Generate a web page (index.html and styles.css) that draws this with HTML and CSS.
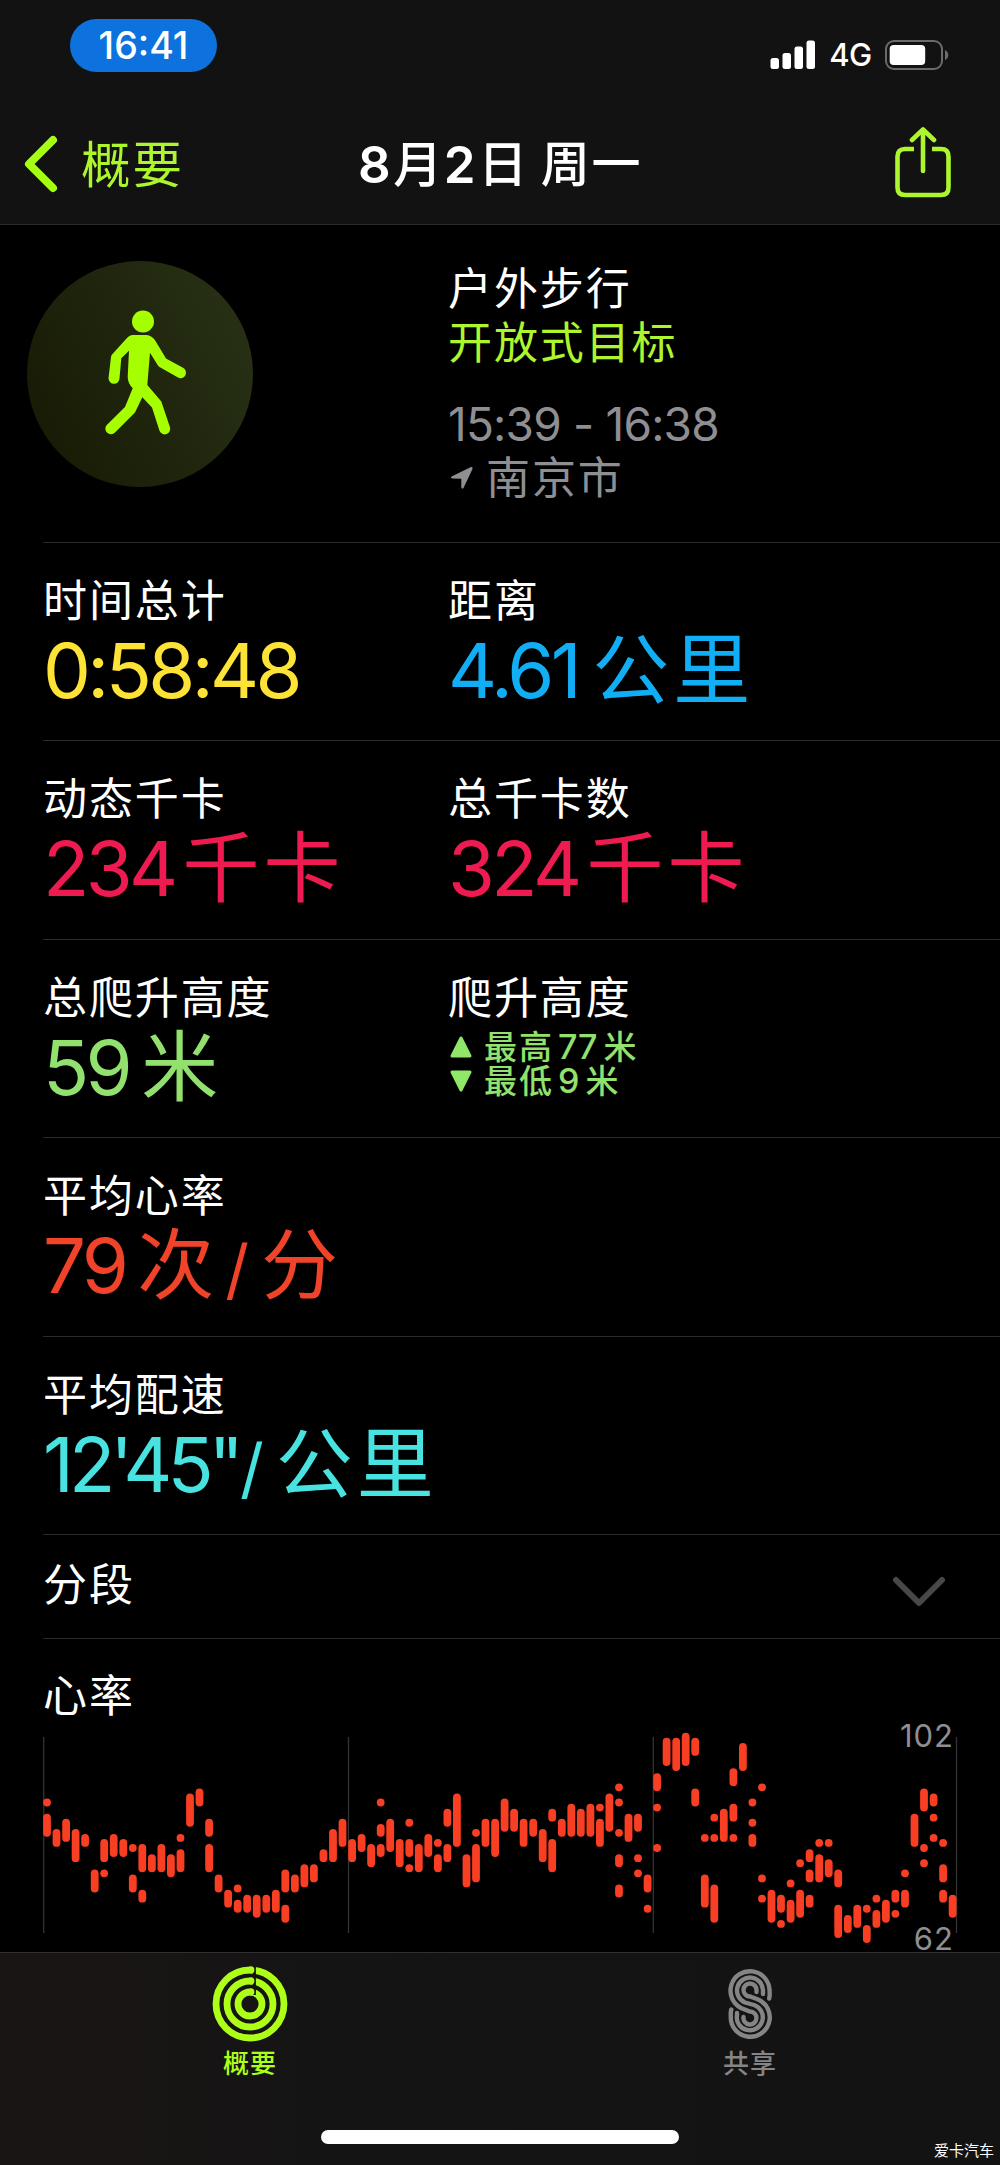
FILE: index.html
```html
<!DOCTYPE html>
<html lang="zh-CN">
<head>
    <meta charset="UTF-8">
    <meta name="viewport" content="width=device-width, initial-scale=1.0">
    <title>8月2日 周一</title>
    <link rel="stylesheet" href="styles.css">
</head>
<body>

    <div class="screen">
        <header class="top">
            <div class="status-bar">
                <div class="time-pill">16:41</div>
                <div class="status-icons">
                    <svg class="signal" width="46" height="30" viewBox="0 0 46 30">
                        <rect x="0.5" y="18" width="8.5" height="11" rx="2.5"/>
                        <rect x="12.5" y="13" width="8.5" height="16" rx="2.5"/>
                        <rect x="24.5" y="6.5" width="8.5" height="22.5" rx="2.5"/>
                        <rect x="36.5" y="0.5" width="8.5" height="28.5" rx="2.5"/>
                    </svg>
                    <span class="network">4G</span>
                    <svg class="battery" width="64" height="30" viewBox="0 0 64 30">
                        <rect x="1" y="1" width="56" height="28" rx="8" fill="none" stroke="#6b6b6b" stroke-width="2"/>
                        <rect x="4.7" y="5" width="35.5" height="20" rx="4" fill="#fff"/>
                        <path d="M60 10 Q63.300 11.500 63.300 15 Q63.300 18.500 60 20 Z" fill="#6b6b6b"/>
                    </svg>
                </div>
            </div>
            <nav class="nav">
                <a class="back">
                    <svg width="34" height="58" viewBox="0 0 34 58">
                        <path d="M29 5 L5 29 L29 53" fill="none" stroke="#a6ff12" stroke-width="8" stroke-linecap="round" stroke-linejoin="round"/>
                    </svg>
                    <span>概要</span>
                </a>
                <h1 class="title"><b>8</b>月<b>2</b>日<i></i>周一</h1>
                <svg class="share" width="58" height="74" viewBox="0 0 58 74">
                    <g fill="none" stroke="#adf52c" stroke-width="4.600">
                        <path d="M20 22 H11 Q3.500 22 3.500 29.500 V60.500 Q3.500 68 11 68 H47 Q54.500 68 54.500 60.500 V29.500 Q54.500 22 47 22 H38"/>
                        <path d="M29 3 V44" stroke-linecap="round"/>
                        <path d="M18 13 L29 2.500 L40 13" stroke-linecap="round" stroke-linejoin="round"/>
                    </g>
                </svg>
            </nav>
        </header>

        <main class="content">
            <section class="workout">
                <div class="badge">
                    <svg width="226" height="226" viewBox="0 0 226 226" fill="#a6ff00">
                        <circle cx="116" cy="60.500" r="11"/>
                        <path d="M105 74 H120 Q125.500 75 128.500 80 L139 97.500 L156 106.800 A5.500 5.500 0 0 1 151 116.600 L132.500 106 Q131 105 130 103 L123 91.700 L120.300 124 L134.300 140.500 L142.900 166 A5.500 5.500 0 0 1 132.500 169.700 L125 146.500 L115.300 136.300 L108 151.500 L88 171.500 A5.500 5.500 0 0 1 79.800 164 L98 146 L105.700 127.300 Q100.700 122 100.700 115.700 L102 89.700 L94.300 97.300 L92.500 117.300 A5.500 5.500 0 0 1 81.500 117.300 L84 96 Q84.300 94 85.500 93 L100 77 Q102 74.500 105 74 Z"/>
                    </svg>
                </div>
                <div class="workout-info">
                    <div class="line white">户外步行</div>
                    <div class="line lime">开放式目标</div>
                    <div class="line gray hours">15:39 - 16:38</div>
                    <div class="line gray place">
                        <svg width="24" height="24" viewBox="0 0 24 24">
                            <path d="M1.500 10.500 L21 1 Q23 0.500 22.500 3 L13.500 22 Q12 23.500 11.300 21.500 V12.700 L2 12.500 Q0 11.500 1.500 10.500 Z"/>
                        </svg>
                        <span>南京市</span>
                    </div>
                </div>
            </section>

            <section class="row">
                <div class="metric">
                    <div class="label">时间总计</div>
                    <div class="value yellow"><span class="num">0:58:48</span></div>
                </div>
                <div class="metric">
                    <div class="label">距离</div>
                    <div class="value blue"><span class="num">4.61</span><span class="unit">公里</span></div>
                </div>
            </section>

            <section class="row">
                <div class="metric">
                    <div class="label">动态千卡</div>
                    <div class="value pink"><span class="num">234</span><span class="unit">千卡</span></div>
                </div>
                <div class="metric">
                    <div class="label">总千卡数</div>
                    <div class="value pink"><span class="num">324</span><span class="unit">千卡</span></div>
                </div>
            </section>

            <section class="row">
                <div class="metric">
                    <div class="label">总爬升高度</div>
                    <div class="value green"><span class="num">59</span><span class="unit">米</span></div>
                </div>
                <div class="metric">
                    <div class="label">爬升高度</div>
                    <div class="elevation green">
                        <div class="elevation-line">
                            <svg width="24" height="24" viewBox="0 0 24 24"><path d="M12 3 L21 21 H3 Z"/></svg>
                            <span>最高</span><span class="small-num">77</span><span>米</span>
                        </div>
                        <div class="elevation-line">
                            <svg width="24" height="24" viewBox="0 0 24 24"><path d="M12 21 L3 3 H21 Z"/></svg>
                            <span>最低</span><span class="small-num">9</span><span>米</span>
                        </div>
                    </div>
                </div>
            </section>

            <section class="row">
                <div class="metric">
                    <div class="label">平均心率</div>
                    <div class="value red"><span class="num">79</span><span class="unit">次</span><span class="slash">/</span><span class="unit">分</span></div>
                </div>
            </section>

            <section class="row">
                <div class="metric">
                    <div class="label">平均配速</div>
                    <div class="value cyan"><span class="num pace">12'45"</span><span class="slash">/</span><span class="unit">公里</span></div>
                </div>
            </section>

            <section class="row splits">
                <div class="label">分段</div>
                <svg width="54" height="32" viewBox="0 0 54 32">
                    <path d="M4 4 L27 27 L50 4" fill="none" stroke="#48484a" stroke-width="6" stroke-linecap="round" stroke-linejoin="round"/>
                </svg>
            </section>

            <section class="heart">
                <div class="label">心率</div>
                <svg id="heartChart" class="chart" width="957" height="225" viewBox="0 0 957 225"></svg>
            </section>
        </main>

        <footer class="tab-bar">
            <div class="tabs">
                <a class="tab active">
                    <svg width="76" height="76" viewBox="0 0 76 76">
                        <g fill="none" stroke="#adff18" stroke-width="6.800">
                            <circle cx="38" cy="38" r="34"/>
                            <circle cx="38" cy="38" r="23"/>
                            <circle cx="38" cy="38" r="12"/>
                        </g>
                        <path d="M42.300 0 V29" stroke="#151413" stroke-width="3.200"/>
                        <g fill="#adff18">
                            <circle cx="39" cy="4" r="3.400"/>
                            <circle cx="39" cy="15" r="3.400"/>
                            <circle cx="39" cy="26" r="3.400"/>
                        </g>
                    </svg>
                    <span>概要</span>
                </a>
                <a class="tab">
                    <svg width="76" height="76" viewBox="0 0 76 76">
                        <g fill="none" stroke="#858585" stroke-width="4.400" stroke-linecap="round">
                            <path d="M57.200 32.500 Q58 29 57.500 24 A19.500 19.500 0 1 0 29 42 L38 45.500 A6.500 6.500 0 1 1 31.500 51"/>
                            <path d="M51 28 V24 A13 13 0 1 0 33 36.500 L42 39 A13 13 0 1 1 25 49 V47"/>
                            <path d="M44.500 26 V24 A6.500 6.500 0 1 0 38 30.500 L45 33 A19.500 19.500 0 1 1 18.800 50 Q18.500 46 19.300 43.500"/>
                        </g>
                    </svg>
                    <span>共享</span>
                </a>
            </div>
            <div class="home-indicator"></div>
            <div class="watermark">爱卡汽车</div>
        </footer>
    </div>

    <script src="script.js"></script>
</body>
</html>
```
FILE: styles.css
```css
* {
    box-sizing: border-box;
}

body {
    margin: 0;
    background-color: #000;
    color: #fff;
    font-family: Inter, "Noto Sans CJK SC", sans-serif;
}

.screen {
    width: 1000px;
    height: 2165px;
    display: flex;
    flex-direction: column;
    overflow: hidden;
}

/* status bar and navigation */
.top {
    height: 225px;
    background-color: #121212;
    border-bottom: 1px solid #2a2a2a;
}

.status-bar {
    display: flex;
    justify-content: space-between;
    align-items: flex-start;
    height: 104px;
    padding: 19px 51px 0 70px;
}

.time-pill {
    width: 147px;
    height: 53px;
    border-radius: 27px;
    background-color: #0e72de;
    font-size: 37.5px;
    font-weight: 500;
    line-height: 54px;
    text-align: center;
}

.status-icons {
    display: flex;
    align-items: center;
    padding-top: 21px;
}

.signal {
    fill: #fff;
}

.network {
    width: 69px;
    text-align: center;
    font-size: 31px;
    font-weight: 500;
    line-height: 30px;
    letter-spacing: -0.5px;
}

.nav {
    display: grid;
    grid-template-columns: 1fr auto 1fr;
    align-items: center;
    height: 120px;
    padding: 0 24px;
}

.back {
    display: flex;
    align-items: center;
    gap: 23px;
    color: #adf52c;
    font-size: 49.5px;
    line-height: 60px;
    letter-spacing: 2px;
}

.back span,
.title {
    padding-top: 2px;
}

.title {
    margin: 0;
    display: flex;
    align-items: center;
    font-size: 49px;
    font-weight: 500;
    line-height: 60px;
    letter-spacing: 1.6px;
}

.title b {
    padding-right: 1px;
    font-size: 51px;
    font-weight: 600;
}

.title i {
    width: 12px;
}

.share {
    justify-self: end;
    margin-right: 24px;
}

/* workout header */
.content {
    height: 1727px;
}

.workout {
    display: flex;
    height: 317px;
    padding: 36px 0 0 27px;
}

.badge {
    width: 226px;
    height: 226px;
    border-radius: 50%;
    background: linear-gradient(65deg, #181b05 10%, #262f14 85%);
}

.workout-info {
    padding: 1px 0 0 195px;
}

.line {
    height: 54px;
    font-size: 44px;
    line-height: 54px;
    letter-spacing: 1.9px;
}

.hours {
    margin-top: 27px;
    font-size: 46px;
    letter-spacing: -0.8px;
}

.place {
    display: flex;
    align-items: center;
    gap: 12px;
}

.place svg {
    margin-left: 2px;
    fill: #8e8e93;
}

.white {
    color: #fff;
}

.lime {
    color: #adf52c;
}

.gray {
    color: #8e8e93;
}

/* metric rows */
.row {
    display: grid;
    grid-template-columns: 405px 1fr;
    height: 198.4px;
    margin-left: 43px;
    border-top: 1px solid #2b2b2d;
}

.metric {
    padding-top: 31px;
}

.label {
    font-size: 44px;
    line-height: 54px;
    letter-spacing: 1.9px;
    white-space: nowrap;
}

.value {
    display: flex;
    align-items: center;
    height: 84px;
    line-height: 84px;
    white-space: nowrap;
}

.num {
    font-size: 76px;
    letter-spacing: -3.6px;
}

.unit {
    padding-left: 12px;
    font-size: 77px;
    letter-spacing: 4px;
}

.slash {
    padding: 8px 0 0 7px;
    font-size: 66px;
}

.pace {
    letter-spacing: -5px;
}

.pace + .slash {
    padding-left: 1px;
}

.blue .unit {
    padding-left: 14px;
}

.pink .unit {
    padding-left: 8px;
}

.yellow { color: #fde335; }
.blue { color: #12aef5; }
.pink { color: #ee1b51; }
.green { color: #92e06e; }
.red { color: #f1432a; }
.cyan { color: #48e2e0; }

.elevation {
    display: flex;
    flex-direction: column;
    padding-top: 5px;
    font-size: 33px;
    font-weight: 500;
}

.elevation-line {
    display: flex;
    align-items: center;
    height: 34px;
    line-height: 34px;
    letter-spacing: 2px;
}

.elevation-line svg {
    margin: 0 11px 0 1px;
    fill: #8fe868;
    stroke: #8fe868;
    stroke-width: 3;
    stroke-linejoin: round;
}

.small-num {
    padding: 0 6px 0 4px;
    font-size: 34px;
    letter-spacing: 0;
}

.splits {
    display: flex;
    justify-content: space-between;
    height: 104px;
    padding: 23px 54px 0 0;
}

.splits svg {
    margin-top: 18px;
}

.heart {
    margin-left: 43px;
    padding-top: 30px;
    border-top: 1px solid #2b2b2d;
}

.chart {
    display: block;
    margin-top: 4px;
    overflow: visible;
}

.grid-line {
    stroke: #333;
    stroke-width: 1.3;
}

.beat {
    stroke: #f83e23;
    stroke-width: 7.8;
    stroke-linecap: round;
}

.axis {
    fill: #8e8e93;
    font-size: 31px;
    letter-spacing: 1px;
    text-anchor: end;
}

/* bottom tabs */
.tab-bar {
    position: relative;
    height: 213px;
    background: linear-gradient(90deg, #1a1514 0, #141414 40%, #131313 100%);
    border-top: 1.500px solid #303030;
}

.tabs {
    display: grid;
    grid-template-columns: 1fr 1fr;
    padding-top: 13px;
}

.tab {
    display: flex;
    flex-direction: column;
    align-items: center;
    color: #858585;
    font-size: 26px;
    font-weight: 500;
    line-height: 36px;
    letter-spacing: 1px;
}

.tab span {
    padding-top: 4px;
}

.active {
    color: #adff18;
}

.home-indicator {
    width: 358px;
    height: 14px;
    margin: 48px auto 0;
    border-radius: 7px;
    background-color: #fff;
}

.watermark {
    position: absolute;
    right: 6px;
    bottom: 4px;
    font-size: 15px;
    line-height: 20px;
}
```
FILE: script.js
```js
// one entry per interval, each holding [high, low] ranges or single readings in bpm
const beats = [
    [89, [86, 83]], [[83, 81]], [[85, 82]], [[83, 78]], [[82, 81]], [[75, 72]], [[81, 78], 75], [[82, 79]],
    [[81, 79]], [80, [74, 72]], [[80, 76], [71, 70]], [[78, 76]], [[80, 76]], [[78, 75]], [82, [79, 76]], [[90, 85]],
    [[91, 89]], [[85, 83], [80, 76]], [[74, 72]], [[71, 69]], [72, [69, 68]], [[70, 68]], [[70, 67]], [[70, 68]],
    [[71, 68]], [[75, 72], [68, 66]], [[74, 72]], [[76, 73]], [[76, 74]], [[79, 78]], [[83, 78]], [[85, 81]],
    [[81, 78]], [[82, 80]], [[80, 77]], [89, [84, 83], [80, 79]], [[85, 80]], [[81, 77]], [85, [81, 79], 76], [[80, 76]],
    [[82, 79]], [81, [78, 76]], [[87, 85], [80, 78]], [[90, 81]], [[78, 73]], [83, [80, 74]], [[85, 81]], [[85, 79]],
    [[89, 84]], [[87, 84]], [[85, 81]], [[85, 83]], [[83, 78]], [[87, 86], [81, 76]], [[85, 83]], [[88, 83]],
    [[87, 83]], [[88, 83]], [88, [85, 81]], [[90, 84]], [92, 89, 83, [78, 77], [72, 71]], [[86, 82]], [[86, 84], 78, 75], [[74, 72], 68],
    [[94, 92], 88, 80], [[101, 97]], [[101, 96]], [[102, 97]], [[101, 99], [91, 89]], [82, [74, 69]], [86, 82, [72, 66]], [[87, 82]],
    [[95, 93], [88, 86], 82], [[100, 96]], [89, 85, [82, 81]], [92, 74, 70], [[71, 66]], [[70, 68], 65], [73, [69, 66]], [77, [71, 67]],
    [[79, 78], [75, 74], [70, 69]], [81, [78, 74]], [81, [77, 75]], [[75, 73], [68, 63]], [[66, 64]], [[68, 65]], [68, [64, 62]], [70, [67, 65]],
    [[69, 66]], [[71, 70], 67], [75, [71, 69]], [[86, 81]], [[91, 88], 80, 77], [[90, 89], 86, 82], [81, [76, 74], [71, 70]], [[70, 67]]
];

const chart = document.getElementById("heartChart");
const yOf = bpm => 9.7 + (102 - bpm) * 5.06;
let html = "";

[0.7, 305.5, 610.3, 913.5].forEach(x => {
    html += `<line class="grid-line" x1="${x}" x2="${x}" y1="10" y2="206"/>`;
});

beats.forEach((parts, i) => {
    const x = (4 + i * 9.533).toFixed(1);
    parts.forEach(part => {
        const [high, low] = Array.isArray(part) ? part : [part, part];
        html += `<line class="beat" x1="${x}" x2="${x}" y1="${yOf(high)}" y2="${yOf(low) + 0.01}"/>`;
    });
});

html += `<text class="axis" x="911" y="20">102</text>`;
html += `<text class="axis" x="911" y="223">62</text>`;
chart.innerHTML = html;
```
